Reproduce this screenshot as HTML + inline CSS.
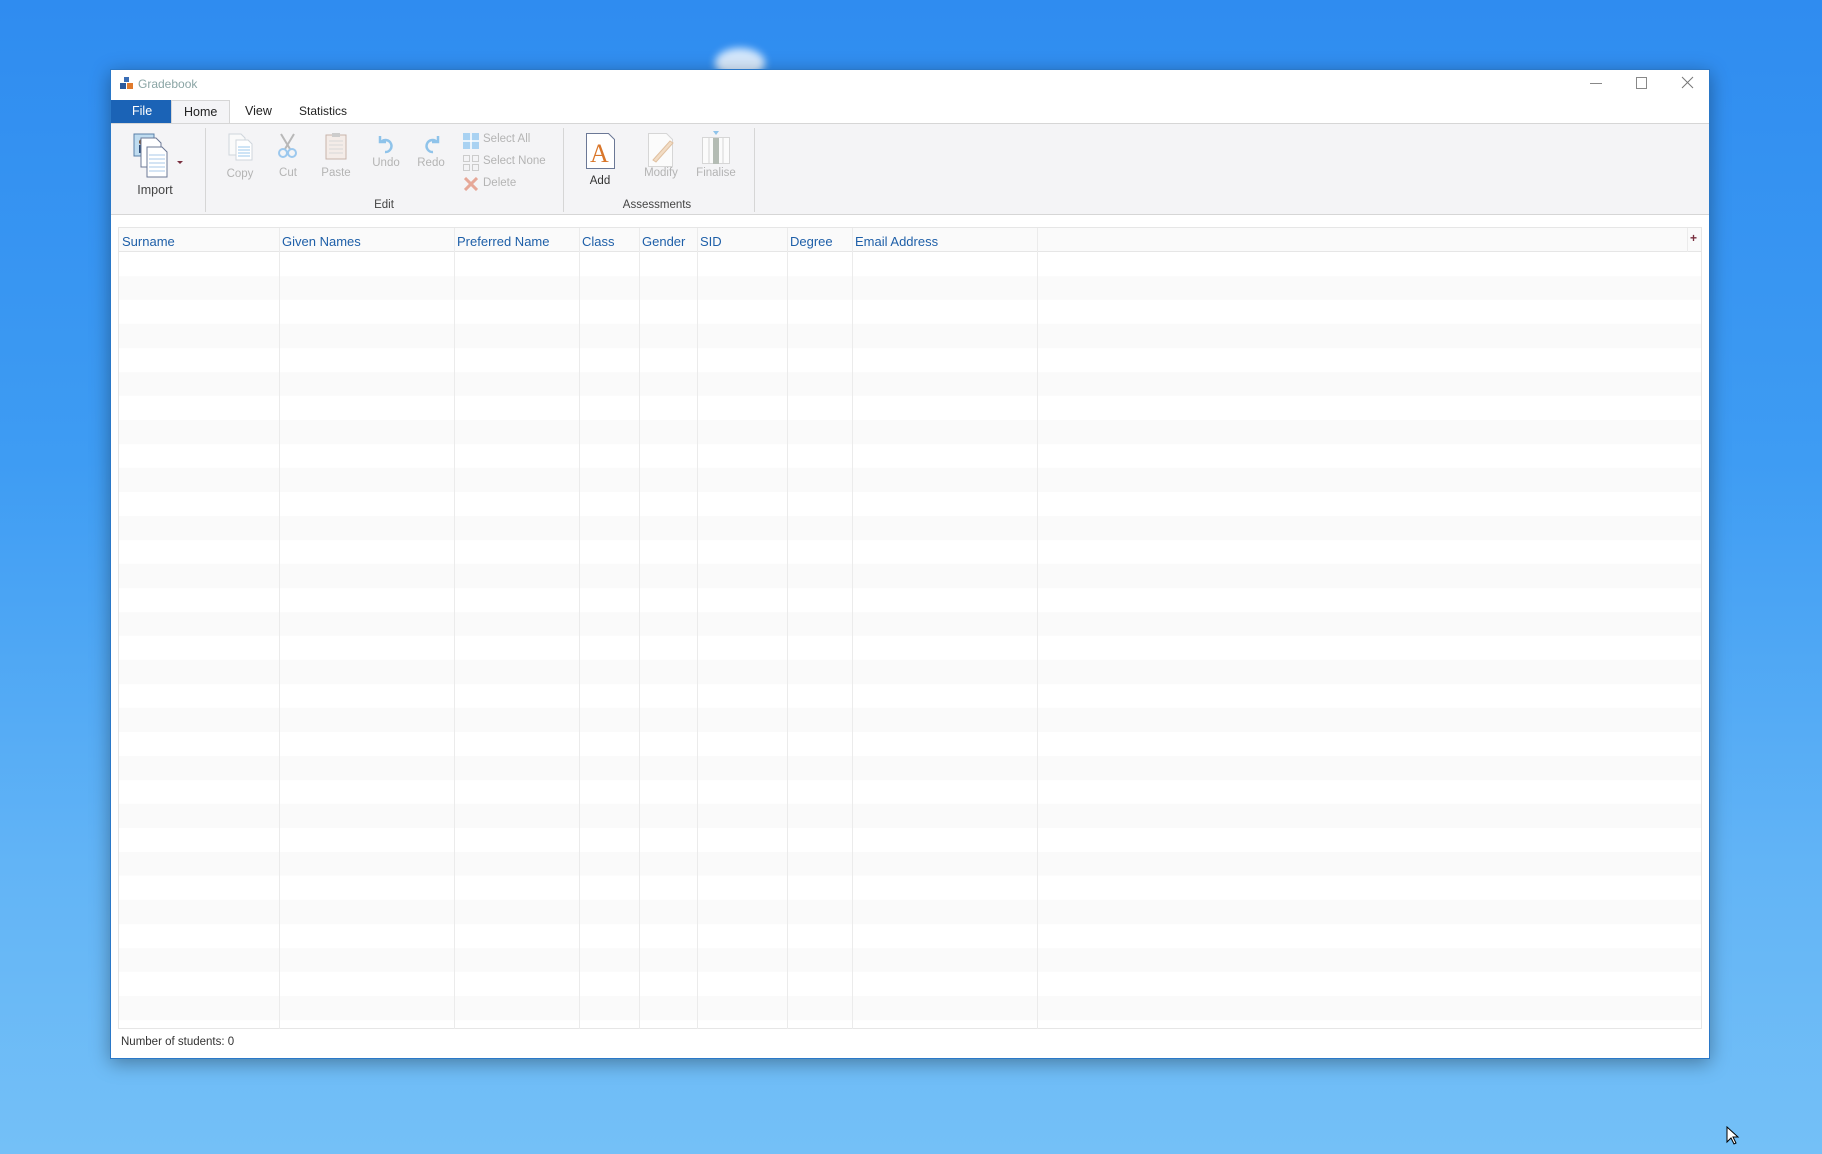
<!DOCTYPE html>
<html><head><meta charset="utf-8"><style>
*{margin:0;padding:0;box-sizing:border-box}
body{width:1822px;height:1154px;overflow:hidden;position:relative;font-family:"Liberation Sans",sans-serif;
background:linear-gradient(180deg,#2f8cf0 0%,#3e9cf3 40%,#62b4f6 75%,#74c0f7 100%);}
.a{position:absolute}
.win{left:110px;top:69px;width:1600px;height:990px;background:#fff;border:1px solid #2a78c8;box-shadow:0 4px 18px rgba(0,0,0,.35)}
.t{position:absolute;white-space:nowrap;font-size:11.5px;color:#444}
.g{color:#b4b4b4}
.c{transform:translateX(-50%)}
.h{position:absolute;top:234px;font-size:13px;color:#1e5fa8}
.vl{position:absolute;top:228px;height:801px;width:1px;background:#ebebeb}
</style></head><body>
<div class="a" style="left:715px;top:48px;width:50px;height:30px;border-radius:50%;background:rgba(255,255,255,.8);filter:blur(4px)"></div>
<div class="a win"></div>
<svg class="a" style="left:120px;top:77px" width="13" height="13"><rect x="4" y="0" width="5" height="5" fill="#3a6db5"/><rect x="0" y="6" width="6" height="6" fill="#2c5a9c"/><rect x="7" y="6" width="6" height="6" fill="#e07a2c"/></svg>
<div class="t" style="left:138px;top:77px;color:#8ba5a5;font-size:12px">Gradebook</div>
<div class="a" style="left:1590px;top:83px;width:12px;height:1px;background:#888"></div>
<div class="a" style="left:1636px;top:77px;width:11px;height:12px;border:1px solid #888"></div>
<svg class="a" style="left:1681px;top:76px" width="13" height="13"><path d="M1 1L12 12M12 1L1 12" stroke="#777" stroke-width="1"/></svg>
<div class="a" style="left:111px;top:100px;width:60px;height:23px;background:#1b63b6"></div>
<div class="t" style="left:132px;top:104px;color:#fff;font-size:12.5px">File</div>
<div class="a" style="left:171px;top:100px;width:59px;height:24px;background:#f4f4f6;border:1px solid #d6d6d6;border-bottom:none"></div>
<div class="t" style="left:184px;top:105px;font-size:12.5px;color:#222">Home</div>
<div class="t" style="left:245px;top:104px;font-size:12.5px;color:#222">View</div>
<div class="t" style="left:299px;top:104px;font-size:12px;color:#222">Statistics</div>
<div class="a" style="left:111px;top:123px;width:1598px;height:92px;background:#f4f4f6;border-top:1px solid #d6d6d6;border-bottom:1px solid #d6d6d6"></div>
<div class="a" style="left:205px;top:128px;width:1px;height:84px;background:#d6d6d6"></div>
<div class="a" style="left:563px;top:128px;width:1px;height:84px;background:#d6d6d6"></div>
<div class="a" style="left:754px;top:128px;width:1px;height:84px;background:#d6d6d6"></div>
<svg class="a" style="left:133px;top:133px" width="50" height="45"><rect x="1" y="1" width="20" height="22" fill="#bfdcf0" stroke="#5a7fa8"/><circle cx="9" cy="9" r="3" fill="#7a4f2e"/><rect x="6" y="12" width="6" height="8" fill="#2e4e7a"/><path d="M8 5h15l5 5v24H8z" fill="#fff" stroke="#6b7896"/><path d="M14 14h15l5 5v25H14z" fill="#fff" stroke="#6b7896"/><path d="M16 22h16M16 26h16M16 30h16M16 34h16M16 38h16" stroke="#a9c8ea"/><path d="M44 28h6l-3 3z" fill="#7a3040"/></svg>
<div class="t c" style="left:155px;top:183px;font-size:12.5px">Import</div>
<svg class="a" style="left:228px;top:133px" width="26" height="28"><path d="M1 1h12l4 4v17H1z" fill="#fafafa" stroke="#cfd6dc"/><path d="M8 7h12l4 4v16H8z" fill="#fff" stroke="#cfd6dc"/><path d="M10 14h12M10 17h12M10 20h12M10 23h12" stroke="#9cc8ee"/></svg>
<div class="t g c" style="left:240px;top:168px">Copy</div>
<svg class="a" style="left:277px;top:133px" width="22" height="26"><path d="M4 1L13 16M17 1L8 16" stroke="#b8b8b8" stroke-width="2"/><circle cx="6" cy="20" r="4" fill="none" stroke="#9cc8ee" stroke-width="2"/><circle cx="15" cy="20" r="4" fill="none" stroke="#9cc8ee" stroke-width="2"/></svg>
<div class="t g c" style="left:288px;top:167px">Cut</div>
<svg class="a" style="left:325px;top:132px" width="22" height="28"><rect x="1" y="3" width="20" height="24" fill="#f4ece8" stroke="#c7b3aa"/><rect x="7" y="1" width="8" height="4" fill="#ccc"/><path d="M4 9h14M4 13h14M4 17h14M4 21h14" stroke="#d8d8d8"/></svg>
<div class="t g c" style="left:336px;top:167px">Paste</div>
<svg class="a" style="left:377px;top:134px" width="18" height="20"><path d="M3 2v6h6" fill="none" stroke="#8fc3ea" stroke-width="2.5"/><path d="M4 8a6 6 0 1 1 4 10" fill="none" stroke="#8fc3ea" stroke-width="2.5"/></svg>
<div class="t g c" style="left:386px;top:157px">Undo</div>
<svg class="a" style="left:423px;top:134px" width="18" height="20"><path d="M15 2v6h-6" fill="none" stroke="#8fc3ea" stroke-width="2.5"/><path d="M14 8a6 6 0 1 0-4 10" fill="none" stroke="#8fc3ea" stroke-width="2.5"/></svg>
<div class="t g c" style="left:431px;top:157px">Redo</div>
<svg class="a" style="left:463px;top:133px" width="16" height="16"><rect x="0.5" y="0.5" width="15" height="15" fill="#a9d2f2" stroke="#a9d2f2"/><path d="M8 0v16M0 8h16" stroke="#fff" stroke-width="1.5"/></svg>
<div class="t g" style="left:483px;top:133px">Select All</div>
<svg class="a" style="left:463px;top:155px" width="16" height="16"><rect x=".5" y=".5" width="6" height="6" fill="none" stroke="#ccc"/><rect x="9.5" y=".5" width="6" height="6" fill="none" stroke="#ccc"/><rect x=".5" y="9.5" width="6" height="6" fill="none" stroke="#ccc"/><rect x="9.5" y="9.5" width="6" height="6" fill="none" stroke="#ccc"/></svg>
<div class="t g" style="left:483px;top:155px">Select None</div>
<svg class="a" style="left:464px;top:177px" width="14" height="14"><path d="M1 1L13 13M13 1L1 13" stroke="#e6a898" stroke-width="3"/></svg>
<div class="t g" style="left:483px;top:177px">Delete</div>
<div class="t c" style="left:384px;top:199px">Edit</div>
<svg class="a" style="left:586px;top:133px" width="29" height="36"><path d="M.5 .5h22l6 6v29H.5z" fill="#fff" stroke="#6b7896"/><text x="4" y="29" font-family="Liberation Serif,serif" font-size="26" fill="#d9762a">A</text></svg>
<div class="t c" style="left:600px;top:175px;color:#333">Add</div>
<svg class="a" style="left:648px;top:133px" width="28" height="34"><path d="M.5 .5h18l6 6v27H.5z" fill="#fbfbfb" stroke="#d6d6d6"/><path d="M5 27L22 8l3 2L8 29z" fill="#f2dcc4" stroke="#e0c0a0"/></svg>
<div class="t g c" style="left:661px;top:167px">Modify</div>
<svg class="a" style="left:702px;top:131px" width="28" height="34"><path d="M11 0h6l-3 4z" fill="#8fc3ea"/><rect x=".5" y="6.5" width="27" height="26" fill="#fbfbfb" stroke="#d6d6d6"/><rect x="11" y="7" width="6" height="26" fill="#b4bcb4"/><path d="M7 7v26M21 7v26" stroke="#d6d6d6"/></svg>
<div class="t g c" style="left:716px;top:167px">Finalise</div>
<div class="t c" style="left:657px;top:199px">Assessments</div>
<div class="a" style="left:118px;top:227px;width:1584px;height:802px;border:1px solid #e6e6e6;background:repeating-linear-gradient(180deg,#fff 0 24px,#fafafa 24px 48px);background-position:0 24px"></div>
<div class="a" style="left:119px;top:228px;width:1582px;height:24px;background:#fafafa;border-bottom:1px solid #e6e6e6"></div>
<div class="vl" style="left:279px"></div><div class="vl" style="left:454px"></div><div class="vl" style="left:579px"></div><div class="vl" style="left:639px"></div><div class="vl" style="left:697px"></div><div class="vl" style="left:787px"></div><div class="vl" style="left:852px"></div><div class="vl" style="left:1037px"></div>
<div class="a" style="left:1687px;top:228px;width:1px;height:24px;background:#ebebeb"></div>
<div class="h" style="left:122px">Surname</div>
<div class="h" style="left:282px">Given Names</div>
<div class="h" style="left:457px">Preferred Name</div>
<div class="h" style="left:582px">Class</div>
<div class="h" style="left:642px">Gender</div>
<div class="h" style="left:700px">SID</div>
<div class="h" style="left:790px">Degree</div>
<div class="h" style="left:855px">Email Address</div>
<div class="t" style="left:1690px;top:231px;color:#7a3040;font-size:12px;font-weight:bold">+</div>
<div class="t" style="left:121px;top:1036px;color:#333">Number of students: 0</div>
<svg class="a" style="left:1726px;top:1126px" width="14" height="20"><path d="M1 1v15l4-4 3 6 2-1-3-6h5z" fill="#fff" stroke="#000"/></svg>
</body></html>
